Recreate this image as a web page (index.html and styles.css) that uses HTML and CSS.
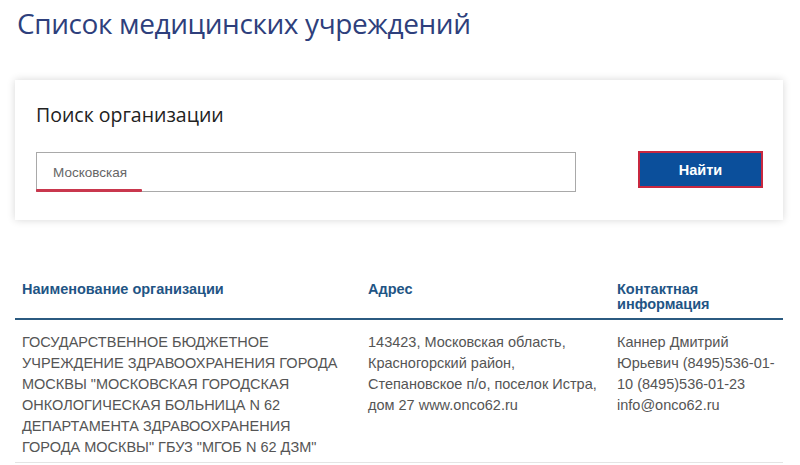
FILE: index.html
```html
<!DOCTYPE html>
<html lang="ru">
<head>
<meta charset="utf-8">
<title>Список медицинских учреждений</title>
<link rel="stylesheet" href="styles.css">
</head>
<body>
<h1 class="page-title">Список медицинских учреждений</h1>
<section class="search-panel">
  <h2 class="search-title">Поиск организации</h2>
  <form class="search-row">
    <div class="search-input">
      <span class="search-value">Московская</span>
      <span class="search-underline"></span>
    </div>
    <button type="button" class="search-btn">Найти</button>
  </form>
</section>
<table class="org-table">
  <thead>
    <tr>
      <th class="col-name">Наименование организации</th>
      <th class="col-addr">Адрес</th>
      <th class="col-contact">Контактная информация</th>
    </tr>
  </thead>
  <tbody>
    <tr>
      <td class="cell-name">ГОСУДАРСТВЕННОЕ БЮДЖЕТНОЕ УЧРЕЖДЕНИЕ ЗДРАВООХРАНЕНИЯ ГОРОДА МОСКВЫ "МОСКОВСКАЯ ГОРОДСКАЯ ОНКОЛОГИЧЕСКАЯ БОЛЬНИЦА N 62 ДЕПАРТАМЕНТА ЗДРАВООХРАНЕНИЯ ГОРОДА МОСКВЫ" ГБУЗ "МГОБ N 62 ДЗМ"</td>
      <td>143423, Московская область, Красногорский район, Степановское п/о, поселок Истра, дом 27 www.onco62.ru</td>
      <td>Каннер Дмитрий Юрьевич (8495)536-01-10 (8495)536-01-23 info@onco62.ru</td>
    </tr>
  </tbody>
</table>
</body>
</html>
```

FILE: styles.css
```css
html, body {
  margin: 0;
  padding: 0;
  background: #ffffff;
  overflow: hidden;
}
body {
  width: 800px;
  height: 465px;
  font-family: "Liberation Sans", Arial, sans-serif;
}
.page-title {
  margin: 0;
  padding: 3px 0 0 17px;
  height: 78px;
  box-sizing: border-box;
  font-family: "Open Sans", "Noto Sans", sans-serif;
  font-weight: 400;
  font-size: 28px;
  letter-spacing: -0.4px;
  line-height: 40px;
  color: #2e3f7c;
}
.search-panel {
  margin: 2px 17px 0 15px;
  height: 140px;
  box-sizing: border-box;
  padding: 20px 20px 0 21px;
  background: #fff;
  box-shadow: 0 0 8px rgba(0, 0, 0, 0.16);
}
.search-title {
  margin: 0;
  font-family: "Open Sans", "Noto Sans", sans-serif;
  font-weight: 400;
  font-size: 19.5px;
  line-height: 30px;
  color: #222;
}
.search-row {
  margin: 22px 0 0 0;
  display: flex;
  align-items: flex-start;
}
.search-input {
  position: relative;
  width: 540px;
  height: 40px;
  box-sizing: border-box;
  border: 1px solid #a9a9a9;
  padding-left: 16px;
  display: flex;
  align-items: center;
}
.search-value {
  font-size: 13.5px;
  color: #666;
  padding-top: 1px;
}
.search-underline {
  position: absolute;
  left: -1px;
  bottom: -1px;
  width: 106px;
  height: 3px;
  background: #c9374d;
  border-radius: 1px;
}
.search-btn {
  margin-left: auto;
  margin-top: -1px;
  width: 125px;
  height: 37px;
  box-sizing: border-box;
  border: 2px solid #c8283f;
  background: #0b4f9b;
  color: #fff;
  font-family: "Liberation Sans", Arial, sans-serif;
  font-weight: 700;
  font-size: 14.5px;
  padding: 0;
}
.org-table {
  margin: 50px 17px 0 15px;
  width: 768px;
  border-collapse: collapse;
  table-layout: fixed;
}
.org-table th {
  text-align: left;
  vertical-align: top;
  font-size: 14.5px;
  font-weight: 700;
  line-height: 15px;
  color: #1f5585;
  padding: 12px 7px 6px 7px;
  border-bottom: 2px solid #2b5a80;
}
.col-name { width: 332px; }
.col-addr { width: 235px; }
.org-table td {
  vertical-align: top;
  font-size: 14.5px;
  line-height: 21px;
  color: #555;
  padding: 12px 7px 4px 7px;
  border-bottom: 1px solid #e4e4e4;
}
.org-table td.cell-name {
  padding-right: 20px;
}
```
